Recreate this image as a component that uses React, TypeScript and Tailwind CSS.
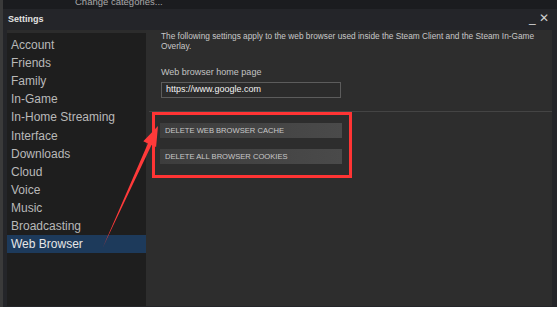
const items = [
  "Account",
  "Friends",
  "Family",
  "In-Game",
  "In-Home Streaming",
  "Interface",
  "Downloads",
  "Cloud",
  "Voice",
  "Music",
  "Broadcasting",
  "Web Browser"
]

function Sidebar() {
  return (
    <div className="w-[139px] shrink-0 bg-[#1e1e1e] flex flex-col">
      <div className="h-[3px] bg-[#2c2c2c]" />
      <div className="pt-[3px] flex flex-col">
        {items.map((item) => (
          <div
            key={item}
            className={
              item === "Web Browser"
                ? "h-[18.1px] flex items-center pl-[4px] text-[12px] text-[#e6e6e6] bg-[#1d3a5b]"
                : "h-[18.1px] flex items-center pl-[4px] text-[12px] text-[#b9b9b9]"
            }>
            {item}
          </div>
        ))}
      </div>
    </div>
  )
}

function ActionButton({ label }: { label: string }) {
  return (
    <div className="w-[182px] h-[15px] flex items-center pl-[5px] text-[7.6px] text-[#c9c9c9] bg-gradient-to-r from-[#3d3d3d] to-[#4a4a4a]">
      {label}
    </div>
  )
}

function Content() {
  return (
    <div className="flex-1 min-w-0 bg-[#2d2d2d] flex flex-col mr-[5px]">
      <div className="pl-[15px] text-[8.3px] leading-[10px] text-[#c8c8c8] pt-[1px] whitespace-nowrap">
        <div>The following settings apply to the web browser used inside the Steam Client and the Steam In-Game</div>
        <div>Overlay.</div>
      </div>
      <div className="pl-[15px] mt-[16px] text-[9px] text-[#c3c3c3] leading-[10px]">
        Web browser home page
      </div>
      <div className="ml-[15px] mt-[5px] w-[180px] h-[16px] border border-[#5c5c5c] bg-[#2b2b2b] flex items-center pl-[4px] text-[9px] text-[#f2f2f2]">
        https://www.google.com
      </div>
      <div className="mt-[13px] ml-[3px] h-px bg-[#444444]" />
      <div className="ml-[14px] mt-[11px] flex flex-col gap-[11px]">
        <ActionButton label="DELETE WEB BROWSER CACHE" />
        <ActionButton label="DELETE ALL BROWSER COOKIES" />
      </div>
    </div>
  )
}

export default function App() {
  return (
    <div
      className="relative w-[560px] h-[312px] bg-white overflow-hidden"
      style={{ fontFamily: '"Liberation Sans", Arial, sans-serif' }}>
      <div className="w-[557px] h-[307px] bg-[#242529] flex flex-col border-l-[3px] border-[#3a3a3a]">
        <div className="h-[9px] bg-[#1b1c1f] overflow-hidden">
          <div className="ml-[72px] -mt-[4px] text-[9.5px] leading-[11px] text-[#a9a9a9]">Change categories...</div>
        </div>
        <div className="h-[21px] flex items-center justify-between pl-[5px] pr-[8px]">
          <span className="text-[9px] font-bold text-[#e2e2e2]">Settings</span>
          <span className="text-[12px] text-[#d0d0d0] leading-none -mt-[3px]">_ ✕</span>
        </div>
        <div className="flex-1 flex pl-[4px] pb-[1px]">
          <Sidebar />
          <Content />
        </div>
      </div>
      <div className="absolute left-[152px] top-[112px] w-[200px] h-[66px] border-[3px] border-[#ff3434]" />
      <svg className="absolute left-0 top-0" width="560" height="312" viewBox="0 0 560 312">
        <polygon
          points="103,247 147.9,143.4 143.3,141.3 158,126 156.1,147.1 151.5,145"
          fill="#ff3a3a"
        />
      </svg>
    </div>
  )
}
